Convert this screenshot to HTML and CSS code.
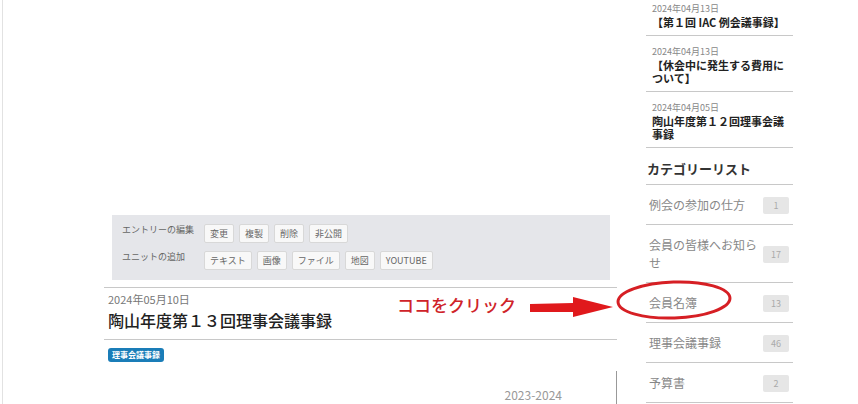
FILE: index.html
```html
<!DOCTYPE html>
<html lang="ja">
<head>
    <meta charset="UTF-8" />
    <meta name="viewport" content="width=device-width, initial-scale=1.0" />
    <title>陶山年度第１３回理事会議事録</title>
    <link rel="stylesheet" href="styles.css">
</head>
<body>

    <div class="page">
        <div class="main">
            <div class="admin-box">
                <div class="admin-row">
                    <span class="admin-label">エントリーの編集</span>
                    <div class="admin-buttons">
                        <button>変更</button>
                        <button>複製</button>
                        <button>削除</button>
                        <button>非公開</button>
                    </div>
                </div>
                <div class="admin-row">
                    <span class="admin-label">ユニットの追加</span>
                    <div class="admin-buttons">
                        <button>テキスト</button>
                        <button>画像</button>
                        <button>ファイル</button>
                        <button>地図</button>
                        <button>YOUTUBE</button>
                    </div>
                </div>
            </div>

            <div class="entry-head">
                <div class="entry-date">2024年05月10日</div>
                <h1 class="entry-title">陶山年度第１３回理事会議事録</h1>
            </div>

            <div class="entry-tags">
                <span class="tag">理事会議事録</span>
            </div>

            <div class="entry-body">
                <div class="term">2023-2024</div>
            </div>
        </div>

        <div class="sidebar">
            <ul class="recent">
                <li>
                    <div class="recent-date">2024年04月13日</div>
                    <div class="recent-title">【第１回 IAC 例会議事録】</div>
                </li>
                <li>
                    <div class="recent-date">2024年04月13日</div>
                    <div class="recent-title">【休会中に発生する費用について】</div>
                </li>
                <li>
                    <div class="recent-date">2024年04月05日</div>
                    <div class="recent-title">陶山年度第１２回理事会議事録</div>
                </li>
            </ul>

            <h2 class="side-heading">カテゴリーリスト</h2>
            <ul class="categories">
                <li><span class="cat-name">例会の参加の仕方</span><span class="count">1</span></li>
                <li><span class="cat-name">会員の皆様へお知らせ</span><span class="count">17</span></li>
                <li><span class="cat-name">会員名簿</span><span class="count">13</span></li>
                <li><span class="cat-name">理事会議事録</span><span class="count">46</span></li>
                <li><span class="cat-name">予算書</span><span class="count">2</span></li>
            </ul>
        </div>
    </div>

    <!-- annotation drawn over the screenshot -->
    <div class="note-text">ココをクリック</div>
    <svg class="note-arrow" width="86" height="24" viewBox="0 0 86 24">
        <path d="M1 8 L44 7 L44 1 L84 11 L44 21 L44 16 L1 16 Z" fill="#e0191c" />
    </svg>
    <svg class="note-ring" width="124" height="46" viewBox="0 0 124 46">
        <ellipse cx="62" cy="23" rx="56" ry="18" fill="none" stroke="#d61f24" stroke-width="3" transform="rotate(-2 62 23)" />
    </svg>

</body>
</html>
```

FILE: styles.css
```css
body {
    margin: 0;
    font-family: "Noto Sans CJK JP", "Noto Sans", sans-serif;
    background-color: #fff;
    color: #333;
    overflow: hidden;
}

ul {
    list-style: none;
    margin: 0;
    padding: 0;
}

.page {
    display: flex;
    margin-left: 2px;
    padding-left: 101px;
    border-left: 1px solid #e2e2e2;
    height: 404px;
}

.main {
    width: 513px;
    padding-top: 215px;
}

.admin-box {
    margin: 0 7px 7px 8px;
    padding: 9px 10px 10px;
    background-color: #e5e6ea;
}

.admin-row {
    display: flex;
    align-items: flex-start;
}

    .admin-row + .admin-row {
        margin-top: 8px;
    }

.admin-label {
    width: 82px;
    font-size: 9px;
    line-height: 12px;
    color: #666;
}

.admin-buttons {
    display: flex;
    gap: 5px;
}

    .admin-buttons button {
        height: 19px;
        padding: 0 5px;
        font-family: inherit;
        font-size: 9px;
        color: #666;
        background-color: #f8f8f8;
        border: 1px solid #d8d8d8;
        border-radius: 2px;
    }

.entry-head {
    border-top: 1px solid #c8c8c8;
    border-bottom: 1px solid #c8c8c8;
    padding: 5px 4px 8px;
}

.entry-date {
    font-size: 11px;
    line-height: 13px;
    color: #777;
}

.entry-title {
    margin: 3px 0 0;
    font-size: 16px;
    line-height: 22px;
    font-weight: 500;
    color: #222;
}

.entry-tags {
    display: flex;
    padding: 8px 4px 0;
}

.tag {
    padding: 0 4px;
    font-size: 8px;
    line-height: 14px;
    font-weight: bold;
    color: #fff;
    background-color: #1a7db8;
    border-radius: 3px;
}

.entry-body {
    margin-top: 9px;
    height: 40px;
    border-right: 1px solid #999;
}

.term {
    padding-top: 17px;
    padding-right: 54px;
    text-align: right;
    font-size: 12px;
    line-height: 14px;
    color: #999;
}

.sidebar {
    width: 147px;
    margin-left: 29px;
    margin-top: -7px;
}

.recent li {
    padding: 10px 0 6px 6px;
    border-bottom: 1px solid #c8c8c8;
}

.recent-date {
    font-size: 9px;
    line-height: 12px;
    color: #888;
}

.recent-title {
    margin-top: 1px;
    font-size: 11px;
    line-height: 13px;
    font-weight: bold;
    color: #222;
}

.side-heading {
    margin: 12px 0 0;
    padding: 0 0 6px 1px;
    font-size: 13px;
    line-height: 18px;
    font-weight: bold;
    color: #333;
    border-bottom: 1px solid #c8c8c8;
}

.categories li {
    display: flex;
    align-items: center;
    justify-content: space-between;
    padding: 11px 4px 10px 3px;
    border-bottom: 1px solid #c8c8c8;
}

.cat-name {
    width: 110px;
    font-size: 12px;
    line-height: 18px;
    color: #888;
}

.count {
    width: 26px;
    font-size: 9px;
    line-height: 17px;
    text-align: center;
    color: #aaa;
    background-color: #e6e6e6;
    border-radius: 2px;
}

.note-text {
    position: absolute;
    left: 397px;
    top: 292px;
    font-size: 17px;
    line-height: 26px;
    font-weight: 500;
    color: #cf2329;
}

.note-arrow {
    position: absolute;
    left: 529px;
    top: 296px;
}

.note-ring {
    position: absolute;
    left: 612px;
    top: 277px;
}
```
